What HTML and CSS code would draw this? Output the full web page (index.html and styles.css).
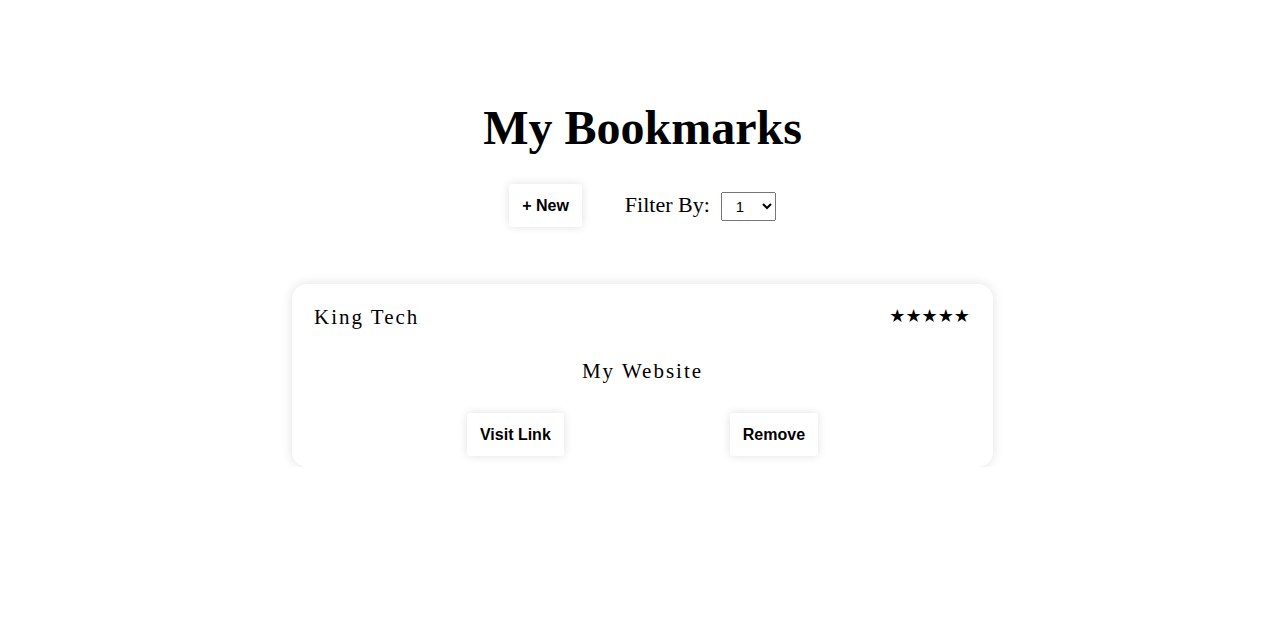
FILE: index.html
```html
<!DOCTYPE html>
<html lang="en">
<head>
<meta charset="utf-8">
<title>My Bookmarks</title>
<link rel="stylesheet" href="styles.css">
</head>
<body>
<main class="page">
  <h1 class="title">My Bookmarks</h1>
  <div class="toolbar">
    <button class="btn">+ New</button>
    <label class="filter">Filter By:
      <select class="filter-select">
        <option>1</option>
        <option>2</option>
        <option>3</option>
        <option>4</option>
        <option>5</option>
      </select>
    </label>
  </div>
  <section class="card">
    <div class="card-head">
      <span class="card-name">King Tech</span>
      <span class="card-stars">★★★★★</span>
    </div>
    <div class="card-desc">My Website</div>
    <div class="card-actions">
      <button class="btn">Visit Link</button>
      <button class="btn">Remove</button>
    </div>
  </section>
</main>
</body>
</html>
```
FILE: styles.css
```css
html, body {
  margin: 0;
  padding: 0;
  background: #fff;
}
body {
  font-family: "Liberation Serif", "Times New Roman", serif;
  color: #000;
}
.page {
  display: flex;
  flex-direction: column;
  align-items: center;
  padding-top: 99px;
  padding-left: 5px;
}
.title {
  font-size: 48px;
  font-weight: bold;
  margin: 0;
  line-height: 58px;
}
.toolbar {
  display: flex;
  align-items: center;
  gap: 43px;
  margin-top: 27px;
}
.btn {
  font-family: "Liberation Sans", Arial, sans-serif;
  font-weight: bold;
  font-size: 16px;
  background: #fff;
  color: #000;
  border: none;
  border-radius: 3px;
  height: 43px;
  padding: 0 13px;
  box-shadow: 0 0 10px rgba(0, 0, 0, 0.12);
  cursor: pointer;
}
.filter {
  font-size: 22px;
  display: flex;
  align-items: center;
  gap: 11px;
  margin-top: -2px;
}
.filter-select {
  width: 55px;
  height: 29px;
  font-family: "Liberation Sans", Arial, sans-serif;
  font-size: 15px;
  margin-top: 4px;
  padding-left: 10px;
}
.card {
  width: 701px;
  box-sizing: border-box;
  margin-top: 57px;
  background: #fff;
  border-radius: 15px;
  box-shadow: 0 0 12px rgba(0, 0, 0, 0.12);
  padding: 21px 22px 11px;
}
.card-head {
  display: flex;
  justify-content: space-between;
  align-items: center;
}
.card-name {
  font-size: 21px;
  letter-spacing: 2px;
}
.card-stars {
  font-family: "DejaVu Sans", sans-serif;
  font-size: 18px;
  padding-right: 1px;
  margin-top: -5px;
}
.card-desc {
  text-align: center;
  font-size: 21px;
  letter-spacing: 2px;
  margin-top: 29px;
}
.card-actions {
  display: flex;
  justify-content: center;
  gap: 166px;
  margin-top: 29px;
}
```
